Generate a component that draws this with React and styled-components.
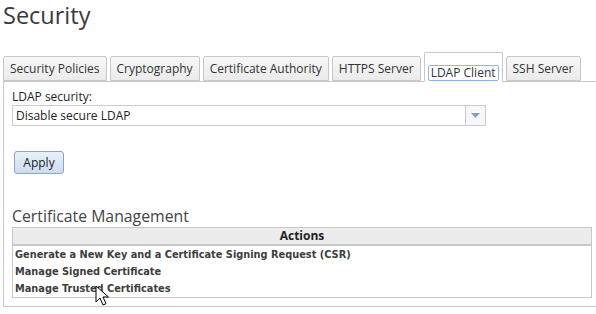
import React from "react";
import styled, { createGlobalStyle } from "styled-components";

const Global = createGlobalStyle`
    body {
        margin: 0;
        background: #fff;
        font-family: "Open Sans", "DejaVu Sans", sans-serif;
        color: #333;
    }
`;

const Page = styled.div`
    position: relative;
    width: 596px;
    height: 314px;
    overflow: hidden;
    padding: 0 0 0 3px;
    box-sizing: border-box;
`;

const Title = styled.h1`
    margin: 0;
    padding-top: 1px;
    font-size: 23.5px;
    font-weight: 400;
    line-height: 28px;
    color: #3a3a3a;
    height: 52px;
`;

const Tabs = styled.div`
    display: flex;
    align-items: flex-end;
    gap: 3px;
    height: 28px;
    border-bottom: 1px solid #c8c8c8;
`;

const Tab = styled.div`
    box-sizing: border-box;
    height: ${p => (p.active ? "30px" : "25px")};
    margin-bottom: ${p => (p.active ? "-1px" : "0")};
    padding: ${p => (p.active ? "11px 3px 0" : "3px 6px 0")};
    border: 1px solid #c8c8c8;
    border-bottom: ${p => (p.active ? "1px solid #fff" : "1px solid #c8c8c8")};
    border-radius: 2px 2px 0 0;
    background: ${p => (p.active ? "#fff" : "linear-gradient(#f7f7f7, #ebebeb)")};
    font-size: 12px;
    line-height: 17px;
    color: #333;
    white-space: nowrap;
`;

const TabLabel = styled.span`
    display: inline-block;
    padding: ${p => (p.active ? "0 2px" : "0")};
    border: ${p => (p.active ? "1px solid #8fb6e8" : "0")};
    border-radius: 2px;
    line-height: 14px;
`;

const Panel = styled.div`
    border-left: 1px solid #c8c8c8;
    border-bottom: 1px solid #c8c8c8;
    height: 225px;
    padding: 7px 4px 0 8px;
    box-sizing: border-box;
`;

const Label = styled.div`
    font-size: 12px;
    line-height: 15px;
    color: #222;
`;

const Select = styled.div`
    display: flex;
    width: 474px;
    height: 21px;
    box-sizing: border-box;
    border: 1px solid #c9ccd2;
    margin-top: 1px;
`;

const SelectValue = styled.div`
    flex: 1;
    font-size: 12px;
    line-height: 19px;
    padding-left: 3px;
    color: #222;
`;

const SelectArrow = styled.div`
    width: 19px;
    border-left: 1px solid #c9ccd2;
    background: #f7f7f7;
    display: flex;
    align-items: center;
    justify-content: center;
`;

const Button = styled.button`
    display: block;
    margin: 25px 0 0 2px;
    width: 50px;
    height: 23px;
    padding: 0;
    border: 1px solid #8ea5c8;
    border-radius: 3px;
    background: linear-gradient(#e9f1fb, #cddcf0);
    font-family: "Open Sans", "DejaVu Sans", sans-serif;
    font-size: 12px;
    color: #222;
`;

const Heading = styled.h2`
    margin: 32px 0 0;
    font-size: 15.8px;
    font-weight: 400;
    line-height: 20px;
    color: #444;
`;

const Table = styled.table`
    width: 580px;
    margin-top: 1px;
    border-collapse: collapse;
    border: 1px solid #c8c8c8;
`;

const Th = styled.th`
    height: 16px;
    padding: 0;
    background: #ececec;
    border-bottom: 2px solid #c8c8c8;
    font-size: 12px;
    font-weight: 700;
    line-height: 14px;
    color: #222;
    text-align: center;
`;

const Td = styled.td`
    height: 17px;
    padding: 0 0 0 2px;
    font-family: "DejaVu Sans", "Liberation Sans", sans-serif;
    font-size: 9.8px;
    font-weight: 700;
    color: #3d3d3d;
`;

const Cursor = styled.svg`
    position: absolute;
    left: 95px;
    top: 285px;
`;

const tabs = ["Security Policies", "Cryptography", "Certificate Authority", "HTTPS Server", "LDAP Client", "SSH Server"];
const actions = [
    "Generate a New Key and a Certificate Signing Request (CSR)",
    "Manage Signed Certificate",
    "Manage Trusted Certificates",
];

export default function App() {
    return (
        <Page>
            <Global />
            <Title>Security</Title>
            <Tabs>
                {tabs.map(t => (
                    <Tab key={t} active={t === "LDAP Client"}>
                        <TabLabel active={t === "LDAP Client"}>{t}</TabLabel>
                    </Tab>
                ))}
            </Tabs>
            <Panel>
                <Label>LDAP security:</Label>
                <Select>
                    <SelectValue>Disable secure LDAP</SelectValue>
                    <SelectArrow>
                        <svg width="9" height="5" viewBox="0 0 9 5"><path d="M0 0h9L4.5 5z" fill="#8a9bc0" /></svg>
                    </SelectArrow>
                </Select>
                <Button>Apply</Button>
                <Heading>Certificate Management</Heading>
                <Table>
                    <thead>
                        <tr><Th>Actions</Th></tr>
                    </thead>
                    <tbody>
                        {actions.map(a => (
                            <tr key={a}><Td>{a}</Td></tr>
                        ))}
                    </tbody>
                </Table>
            </Panel>
            <Cursor width="14" height="22" viewBox="0 0 14 22">
                <path d="M1 1v16l4-4 3 7 3-1.3-3-6.7h5.5z" fill="#fff" stroke="#000" strokeWidth="1" strokeLinejoin="round" />
            </Cursor>
        </Page>
    );
}
